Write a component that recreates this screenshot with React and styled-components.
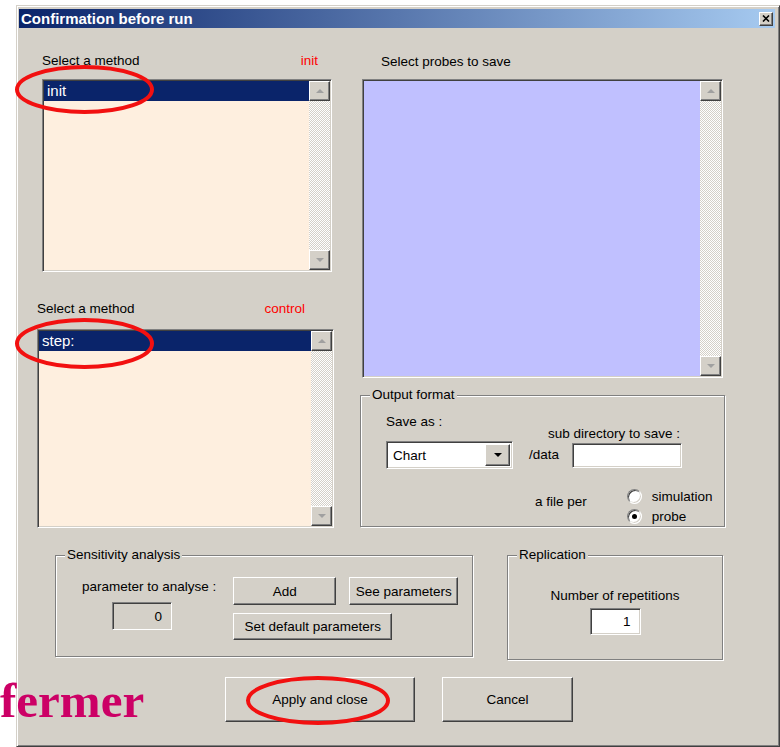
import React from 'react';
import styled, { createGlobalStyle, css } from 'styled-components';

const face = '#d4d0c8';

const GlobalStyle = createGlobalStyle`
  html, body { margin: 0; padding: 0; background: #fff; }
  body {
    font-family: "Liberation Sans", Arial, sans-serif;
    font-size: 13.5px;
    color: #000;
  }
`;

// classic 3d edges
const raised = css`
  border: 1px solid;
  border-color: #fff #404040 #404040 #fff;
  box-shadow: inset -1px -1px 0 #808080, inset 1px 1px 0 ${face};
`;
const sunken = css`
  border: 1px solid;
  border-color: #808080 #fff #fff #808080;
  box-shadow: inset 1px 1px 0 #404040, inset -1px -1px 0 ${face};
`;

const Page = styled.div`
  position: relative;
  width: 780px;
  height: 747px;
  overflow: hidden;
`;

const Window = styled.div`
  box-sizing: border-box;
  margin: 5px 0 0 16px;
  width: 764px;
  height: 742px;
  background: ${face};
  border: 1px solid;
  border-color: ${face} #404040 #404040 ${face};
  box-shadow: inset 1px 1px 0 #fff, inset -1px -1px 0 #808080;
  padding: 3px 4px 0 2px;
  display: flex;
  flex-direction: column;
`;

const TitleBar = styled.div`
  height: 19px;
  flex: none;
  display: flex;
  align-items: center;
  justify-content: space-between;
  padding: 0 2px;
  background: linear-gradient(90deg, #0a246a 0%, #a6caf0 100%);
  color: #fff;
  font-weight: bold;
  font-size: 15px;
`;

const CloseBtn = styled.span`
  ${raised};
  box-sizing: border-box;
  width: 14px;
  height: 14px;
  background: ${face};
  display: flex;
  align-items: center;
  justify-content: center;
`;

const Content = styled.div`
  flex: 1;
  padding-left: 18px;
  display: flex;
  flex-direction: column;
`;

const TopRow = styled.div`
  display: flex;
  gap: 26px;
  align-items: flex-start;
`;

const Column = styled.div`
  width: ${p => p.$w}px;
  display: flex;
  flex-direction: column;
`;

const Section = styled.div`
  margin-top: ${p => p.$top}px;
  padding-left: ${p => p.$inset}px;
  display: flex;
  flex-direction: column;
`;

const LabelRow = styled.div`
  display: flex;
  justify-content: space-between;
  line-height: 16px;
  padding-right: ${p => p.$pr || 0}px;
  padding-left: ${p => p.$pl || 0}px;
`;

const Hint = styled.span`
  color: #ff0000;
`;

const ListBox = styled.div`
  ${sunken};
  box-sizing: border-box;
  width: ${p => p.$w}px;
  height: ${p => p.$h}px;
  margin: ${p => p.$mt}px 0 0 ${p => p.$ml || 0}px;
  padding: 1px;
  background: ${p => p.$bg};
  display: flex;
`;

const Items = styled.div`
  flex: 1;
  min-width: 0;
`;

const Item = styled.div`
  height: 20px;
  line-height: 20px;
  padding-left: 3px;
  font-size: 15px;
  background: #0a246a;
  color: #fff;
`;

const ScrollBar = styled.div`
  width: 21px;
  display: flex;
  flex-direction: column;
`;

const ScrollBtn = styled.div`
  ${raised};
  box-sizing: border-box;
  height: 20px;
  background: ${face};
  display: flex;
  align-items: center;
  justify-content: center;
`;

const Track = styled.div`
  flex: 1;
  background: repeating-conic-gradient(${face} 0 25%, #fff 0 50%) 0 0 / 2px 2px;
`;

const Arrow = styled.span`
  width: 0;
  height: 0;
  border-left: 4px solid transparent;
  border-right: 4px solid transparent;
  ${p => (p.$down
    ? css`border-top: 4px solid ${p.$color};`
    : css`border-bottom: 4px solid ${p.$color};`)}
`;

const Group = styled.fieldset`
  box-sizing: border-box;
  margin: ${p => p.$mt || 0}px 0 0 ${p => p.$ml || 0}px;
  padding: 0;
  min-width: 0;
  width: ${p => p.$w}px;
  height: ${p => p.$h}px;
  border: 1px solid #808080;
  box-shadow: 1px 1px 0 #fff, inset 1px 1px 0 #fff;
`;

const Legend = styled.legend`
  margin-left: 9px;
  padding: 0 2px;
  line-height: 16px;
  background: ${face};
`;

const OutputBody = styled.div`
  padding: 11px 0 0 25px;
`;

const Row = styled.div`
  display: flex;
  align-items: flex-start;
  margin-top: ${p => p.$mt || 0}px;
  margin-left: ${p => p.$ml || 0}px;
  gap: ${p => p.$gap || 0}px;
`;

const Stack = styled.div`
  display: flex;
  flex-direction: column;
  align-items: ${p => p.$align || 'flex-start'};
  margin-left: ${p => p.$ml || 0}px;
  margin-top: ${p => p.$mt || 0}px;
  gap: ${p => p.$gap || 0}px;
`;

const Text = styled.span`
  line-height: 16px;
  white-space: nowrap;
  margin-top: ${p => p.$mt || 0}px;
  margin-right: ${p => p.$mr || 0}px;
`;

const Combo = styled.div`
  ${sunken};
  box-sizing: border-box;
  width: 127px;
  height: 28px;
  margin-top: 11px;
  padding: 2px;
  background: #fff;
  display: flex;
  align-items: center;
`;

const ComboText = styled.span`
  flex: 1;
  padding-left: 4px;
`;

const ComboBtn = styled.span`
  ${raised};
  box-sizing: border-box;
  width: 25px;
  height: 100%;
  background: ${face};
  display: flex;
  align-items: center;
  justify-content: center;
`;

const Field = styled.div`
  ${sunken};
  box-sizing: border-box;
  width: ${p => p.$w}px;
  height: ${p => p.$h}px;
  margin-left: ${p => p.$ml || 0}px;
  margin-top: ${p => p.$mt || 0}px;
  padding-right: 9px;
  background: ${p => p.$bg || '#fff'};
  display: flex;
  align-items: center;
  justify-content: flex-end;
`;

const RadioRow = styled.label`
  display: flex;
  align-items: center;
  gap: 10px;
  height: 16px;
`;

const Radio = styled.span`
  position: relative;
  box-sizing: border-box;
  width: 15px;
  height: 15px;
  border-radius: 50%;
  background: #fff;
  border: 1px solid;
  border-color: #808080 #fff #fff #808080;
  box-shadow: inset 1px 1px 0 #404040, inset -1px -1px 0 ${face};
  ${p => p.$checked && css`
    &::after {
      content: '';
      position: absolute;
      left: 4px;
      top: 4px;
      width: 5px;
      height: 5px;
      border-radius: 50%;
      background: #000;
    }
  `}
`;

const SensBody = styled.div`
  display: flex;
  padding: 14px 0 0 26px;
`;

const Button = styled.button`
  ${raised};
  box-sizing: border-box;
  width: ${p => p.$w}px;
  height: ${p => p.$h}px;
  padding: 0;
  background: ${face};
  font: inherit;
  color: #000;
`;

const ReplBody = styled.div`
  padding-top: 25px;
  display: flex;
  flex-direction: column;
  align-items: center;
`;

const BottomRow = styled.div`
  display: flex;
  margin-top: 19px;
  padding-left: 18px;
  gap: 34px;
  align-items: flex-start;
`;

const Actions = styled.div`
  display: flex;
  gap: 27px;
  margin-top: 17px;
  padding-left: 188px;
`;

const Marks = styled.svg`
  position: absolute;
  left: 0;
  top: 0;
  pointer-events: none;
`;

const Caption = styled.div`
  position: absolute;
  left: 0;
  top: 676px;
  font-family: "Liberation Serif", "Times New Roman", serif;
  font-weight: bold;
  font-size: 49px;
  line-height: 49px;
  color: #cc0066;
`;

const Scroll = () => (
  <ScrollBar>
    <ScrollBtn><Arrow $color="#a0a0a0" /></ScrollBtn>
    <Track />
    <ScrollBtn><Arrow $down $color="#a0a0a0" /></ScrollBtn>
  </ScrollBar>
);

const MethodList = ({ top, inset, pr, hint, item, w, h, gap }) => (
  <Section $top={top} $inset={inset}>
    <LabelRow $pr={pr}>
      <span>Select a method</span>
      <Hint>{hint}</Hint>
    </LabelRow>
    <ListBox $w={w} $h={h} $mt={gap} $bg="#feefdf">
      <Items><Item>{item}</Item></Items>
      <Scroll />
    </ListBox>
  </Section>
);

export default function App() {
  return (
    <Page>
      <GlobalStyle />
      <Window>
        <TitleBar>
          <span>Confirmation before run</span>
          <CloseBtn>
            <svg width="8" height="7" viewBox="0 0 8 7">
              <path d="M1 0.5l6 6M7 0.5l-6 6" stroke="#000" strokeWidth="1.6" />
            </svg>
          </CloseBtn>
        </TitleBar>
        <Content>
          <TopRow>
            <Column $w={297}>
              <MethodList top={25} inset={5} pr={16} hint="init" item="init" w={290} h={193} gap={10} />
              <MethodList top={29} inset={0} pr={29} hint="control" item="step:" w={297} h={199} gap={12} />
            </Column>
            <Column $w={365}>
              <Section $top={26} $inset={0}>
                <LabelRow $pl={21}><span>Select probes to save</span></LabelRow>
                <ListBox $w={361} $h={299} $mt={9} $ml={2} $bg="#c0c0ff">
                  <Items />
                  <Scroll />
                </ListBox>
              </Section>
              <Group $w={365} $h={140} $mt={9}>
                <Legend>Output format</Legend>
                <OutputBody>
                  <Row>
                    <Stack>
                      <Text>Save as :</Text>
                      <Combo>
                        <ComboText>Chart</ComboText>
                        <ComboBtn><Arrow $down $color="#000" /></ComboBtn>
                      </Combo>
                    </Stack>
                    <Stack $ml={16} $align="flex-end">
                      <Text $mt={12} $mr={2}>sub directory to save :</Text>
                      <Row $mt={1}>
                        <Text $mt={4}>/data</Text>
                        <Field $w={110} $h={25} $ml={13} />
                      </Row>
                    </Stack>
                  </Row>
                  <Row $mt={19} $ml={149}>
                    <Text $mt={6}>a file per</Text>
                    <Stack $ml={40} $gap={4}>
                      <RadioRow><Radio /><span>simulation</span></RadioRow>
                      <RadioRow><Radio $checked /><span>probe</span></RadioRow>
                    </Stack>
                  </Row>
                </OutputBody>
              </Group>
            </Column>
          </TopRow>

          <BottomRow>
            <Group $w={418} $h={110}>
              <Legend>Sensitivity analysis</Legend>
              <SensBody>
                <Stack $mt={2}>
                  <Text>parameter to analyse :</Text>
                  <Field $w={60} $h={28} $ml={30} $mt={7} $bg={face}>0</Field>
                </Stack>
                <Stack $ml={17} $gap={8}>
                  <Row $gap={13}>
                    <Button $w={103} $h={28}>Add</Button>
                    <Button $w={109} $h={28}>See parameters</Button>
                  </Row>
                  <Button $w={159} $h={27}>Set default parameters</Button>
                </Stack>
              </SensBody>
            </Group>
            <Group $w={216} $h={113}>
              <Legend>Replication</Legend>
              <ReplBody>
                <Text>Number of repetitions</Text>
                <Field $w={51} $h={27} $mt={4}>1</Field>
              </ReplBody>
            </Group>
          </BottomRow>

          <Actions>
            <Button $w={190} $h={45}>Apply and close</Button>
            <Button $w={131} $h={45}>Cancel</Button>
          </Actions>
        </Content>
      </Window>

      <Caption>fermer</Caption>
      <Marks width="780" height="747" viewBox="0 0 780 747">
        <g fill="none" stroke="#f21010" strokeWidth="4">
          <ellipse cx="84.5" cy="89.5" rx="67.5" ry="22.5" />
          <ellipse cx="84.5" cy="343.5" rx="67.5" ry="23.5" />
          <ellipse cx="318" cy="700.5" rx="70" ry="22.5" />
        </g>
      </Marks>
    </Page>
  );
}
